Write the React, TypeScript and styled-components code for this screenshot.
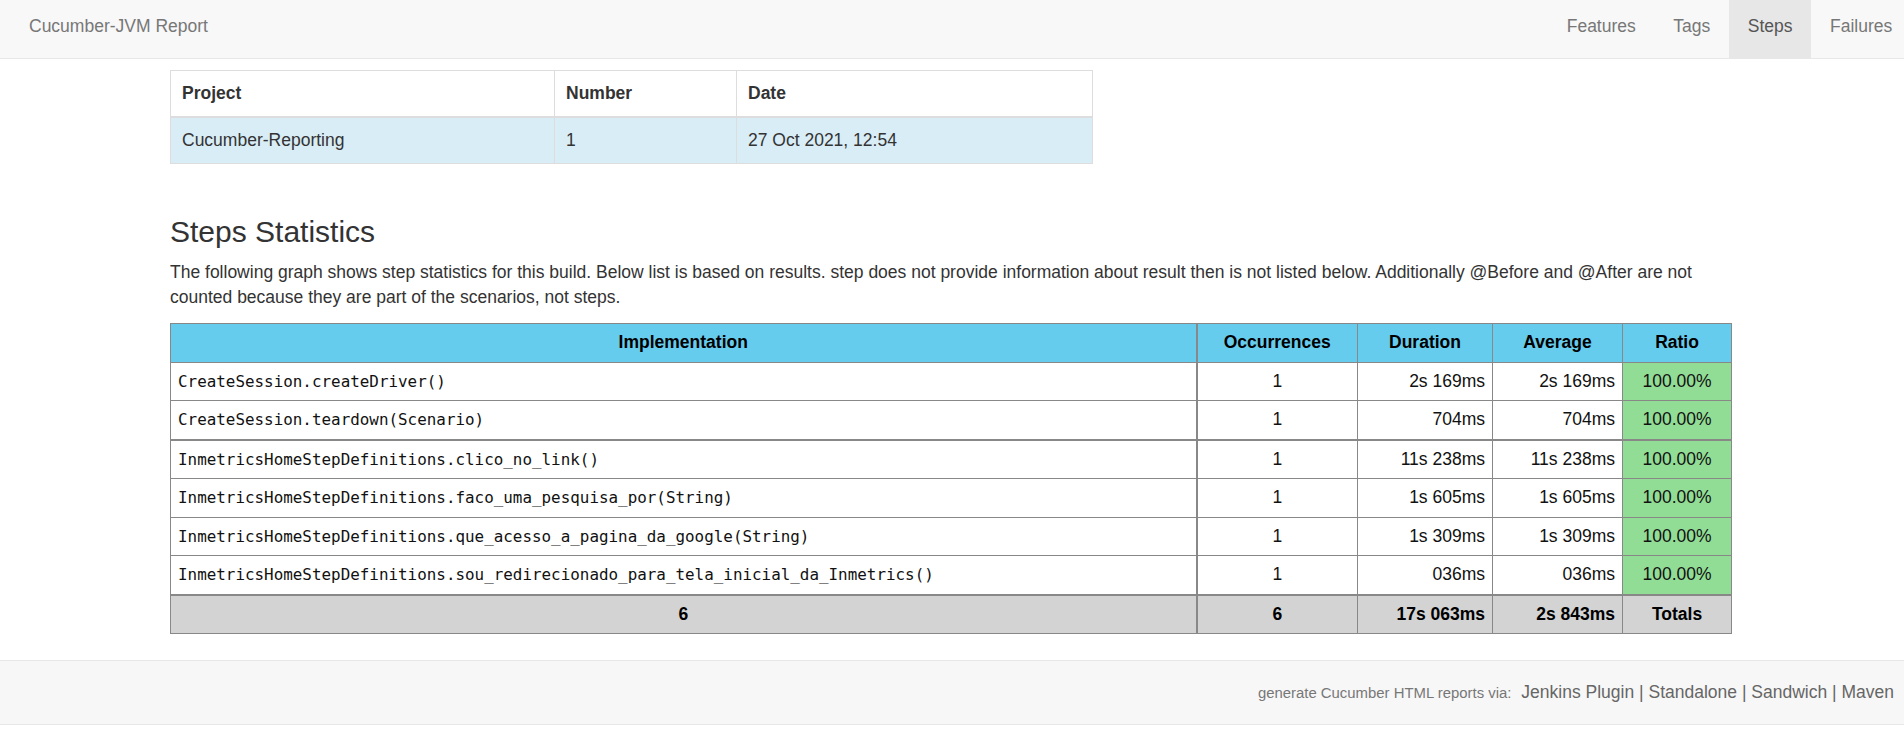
import React from "react";
import styled, { createGlobalStyle, css } from "styled-components";

const GlobalStyle = createGlobalStyle`
  html, body {
    margin: 0;
    padding: 0;
    background: #fff;
    overflow: hidden;
  }
  body {
    font-family: "Liberation Sans", Arial, sans-serif;
    font-size: 17.5px;
    line-height: 25px;
    color: #333;
  }
  * { box-sizing: border-box; }
`;

const Navbar = styled.header`
  display: flex;
  align-items: stretch;
  justify-content: space-between;
  height: 59px;
  background: #f8f8f8;
  border-bottom: 1px solid #e7e7e7;
  padding-left: 29px;
  overflow: hidden;
`;

const Brand = styled.a`
  display: block;
  padding-top: 14px;
  color: #777;
  text-decoration: none;
  font-size: 17.5px;
  line-height: 25px;
`;

const NavList = styled.nav`
  display: flex;
  margin-right: -7px;
`;

const NavLink = styled.a<{ $active?: boolean }>`
  display: block;
  padding: 14px 18.75px 0;
  color: #777;
  text-decoration: none;
  line-height: 25px;
  ${(p) =>
    p.$active &&
    css`
      background: #e7e7e7;
      color: #555;
    `}
`;

const Container = styled.main`
  width: 1564px;
  margin: 11px auto 0;
  padding-right: 3px;
`;

const InfoTable = styled.table`
  width: 922px;
  border-collapse: collapse;
  border: 1px solid #ddd;
  margin: 0;
  table-layout: fixed;
`;

const InfoTh = styled.th`
  text-align: left;
  font-weight: bold;
  padding: 10px 11px;
  line-height: 25px;
  border: 1px solid #ddd;
  border-bottom: 2px solid #ddd;
  color: #333;
`;

const InfoTd = styled.td`
  padding: 10px 11px;
  line-height: 25px;
  border: 1px solid #ddd;
  background: #d9edf7;
  color: #333;
`;

const SectionTitle = styled.h3`
  margin: 50.5px 0 12.5px;
  font-size: 30px;
  line-height: 33px;
  font-weight: 500;
  color: #333;
`;

const Description = styled.p`
  margin: 0 0 13px;
  font-size: 17.5px;
  line-height: 25px;
  max-width: 1561px;
`;

const StatsTable = styled.table`
  width: 1561px;
  border-collapse: collapse;
  table-layout: fixed;
  border: 1px solid #888;
  margin-bottom: 26px;
  color: #111;
`;

type Align = "left" | "center" | "right";

const StatsTh = styled.th<{ $wideRight?: boolean }>`
  background: #66ccee;
  color: #000;
  font-weight: bold;
  text-align: center;
  padding: 6px 7px;
  line-height: 25.5px;
  border: 1px solid #888;
  ${(p) => p.$wideRight && css`border-right: 2px solid #888;`}
`;

const StatsTd = styled.td<{
  $align?: Align;
  $mono?: boolean;
  $passed?: boolean;
  $total?: boolean;
  $thick?: boolean;
  $wideRight?: boolean;
}>`
  padding: 6px 7px;
  line-height: 25.5px;
  border: 1px solid #888;
  text-align: ${(p) => p.$align ?? "left"};
  white-space: nowrap;
  ${(p) =>
    p.$mono &&
    css`
      font-family: "DejaVu Sans Mono", "Liberation Mono", monospace;
      font-size: 15.9px;
      letter-spacing: 0;
    `}
  ${(p) => p.$passed && css`background: #92dd96;`}
  ${(p) =>
    p.$total &&
    css`
      background: #d3d3d3;
      font-weight: bold;
      color: #000;
    `}
  ${(p) => p.$thick && css`border-bottom: 2px solid #888;`}
  ${(p) => p.$wideRight && css`border-right: 2px solid #888;`}
`;

const Footer = styled.footer`
  height: 65px;
  background: #f7f7f7;
  border-top: 1px solid #e7e7e7;
  border-bottom: 1px solid #e7e7e7;
  padding: 0 10px 0 0;
  display: flex;
  justify-content: flex-end;
  align-items: center;
`;

const FooterLine = styled.div`
  line-height: 25px;
  color: #666;
`;

const FooterNote = styled.small`
  font-size: 14.9px;
  color: #777;
  margin-right: 5px;
`;

const FooterLink = styled.a`
  color: #666;
  text-decoration: none;
`;

type Step = {
  name: string;
  occurrences: number;
  duration: string;
  average: string;
  ratio: string;
  thick?: boolean;
};

const steps: Step[] = [
  { name: "CreateSession.createDriver()", occurrences: 1, duration: "2s 169ms", average: "2s 169ms", ratio: "100.00%" },
  { name: "CreateSession.teardown(Scenario)", occurrences: 1, duration: "704ms", average: "704ms", ratio: "100.00%", thick: true },
  { name: "InmetricsHomeStepDefinitions.clico_no_link()", occurrences: 1, duration: "11s 238ms", average: "11s 238ms", ratio: "100.00%" },
  { name: "InmetricsHomeStepDefinitions.faco_uma_pesquisa_por(String)", occurrences: 1, duration: "1s 605ms", average: "1s 605ms", ratio: "100.00%" },
  { name: "InmetricsHomeStepDefinitions.que_acesso_a_pagina_da_google(String)", occurrences: 1, duration: "1s 309ms", average: "1s 309ms", ratio: "100.00%" },
  { name: "InmetricsHomeStepDefinitions.sou_redirecionado_para_tela_inicial_da_Inmetrics()", occurrences: 1, duration: "036ms", average: "036ms", ratio: "100.00%", thick: true },
];

const links = ["Jenkins Plugin", "Standalone", "Sandwich", "Maven"];

export default function App() {
  return (
    <>
      <GlobalStyle />
      <Navbar>
        <Brand href="#">Cucumber-JVM Report</Brand>
        <NavList>
          <NavLink href="#">Features</NavLink>
          <NavLink href="#">Tags</NavLink>
          <NavLink href="#" $active>
            Steps
          </NavLink>
          <NavLink href="#">Failures</NavLink>
        </NavList>
      </Navbar>

      <Container>
        <InfoTable>
          <colgroup>
            <col style={{ width: 384 }} />
            <col style={{ width: 182 }} />
            <col style={{ width: 356 }} />
          </colgroup>
          <thead>
            <tr>
              <InfoTh>Project</InfoTh>
              <InfoTh>Number</InfoTh>
              <InfoTh>Date</InfoTh>
            </tr>
          </thead>
          <tbody>
            <tr>
              <InfoTd>Cucumber-Reporting</InfoTd>
              <InfoTd>1</InfoTd>
              <InfoTd>27 Oct 2021, 12:54</InfoTd>
            </tr>
          </tbody>
        </InfoTable>

        <SectionTitle>Steps Statistics</SectionTitle>
        <Description>
          The following graph shows step statistics for this build. Below list is based on results. step does not
          provide information about result then is not listed below. Additionally @Before and @After are not counted
          because they are part of the scenarios, not steps.
        </Description>

        <StatsTable>
          <colgroup>
            <col style={{ width: 1026 }} />
            <col style={{ width: 161 }} />
            <col style={{ width: 135 }} />
            <col style={{ width: 130 }} />
            <col style={{ width: 109 }} />
          </colgroup>
          <thead>
            <tr>
              <StatsTh $wideRight>Implementation</StatsTh>
              <StatsTh>Occurrences</StatsTh>
              <StatsTh>Duration</StatsTh>
              <StatsTh>Average</StatsTh>
              <StatsTh>Ratio</StatsTh>
            </tr>
          </thead>
          <tbody>
            {steps.map((s) => (
              <tr key={s.name}>
                <StatsTd $mono $thick={s.thick} $wideRight>
                  {s.name}
                </StatsTd>
                <StatsTd $align="center" $thick={s.thick}>
                  {s.occurrences}
                </StatsTd>
                <StatsTd $align="right" $thick={s.thick}>
                  {s.duration}
                </StatsTd>
                <StatsTd $align="right" $thick={s.thick}>
                  {s.average}
                </StatsTd>
                <StatsTd $align="center" $passed $thick={s.thick}>
                  {s.ratio}
                </StatsTd>
              </tr>
            ))}
          </tbody>
          <tfoot>
            <tr>
              <StatsTd $align="center" $total $wideRight>
                6
              </StatsTd>
              <StatsTd $align="center" $total>
                6
              </StatsTd>
              <StatsTd $align="right" $total>
                17s 063ms
              </StatsTd>
              <StatsTd $align="right" $total>
                2s 843ms
              </StatsTd>
              <StatsTd $align="center" $total>
                Totals
              </StatsTd>
            </tr>
          </tfoot>
        </StatsTable>
      </Container>

      <Footer>
        <FooterLine>
          <FooterNote>generate Cucumber HTML reports via:</FooterNote>{" "}
          {links.map((l, i) => (
            <React.Fragment key={l}>
              {i > 0 && " | "}
              <FooterLink href="#">{l}</FooterLink>
            </React.Fragment>
          ))}
        </FooterLine>
      </Footer>
    </>
  );
}
